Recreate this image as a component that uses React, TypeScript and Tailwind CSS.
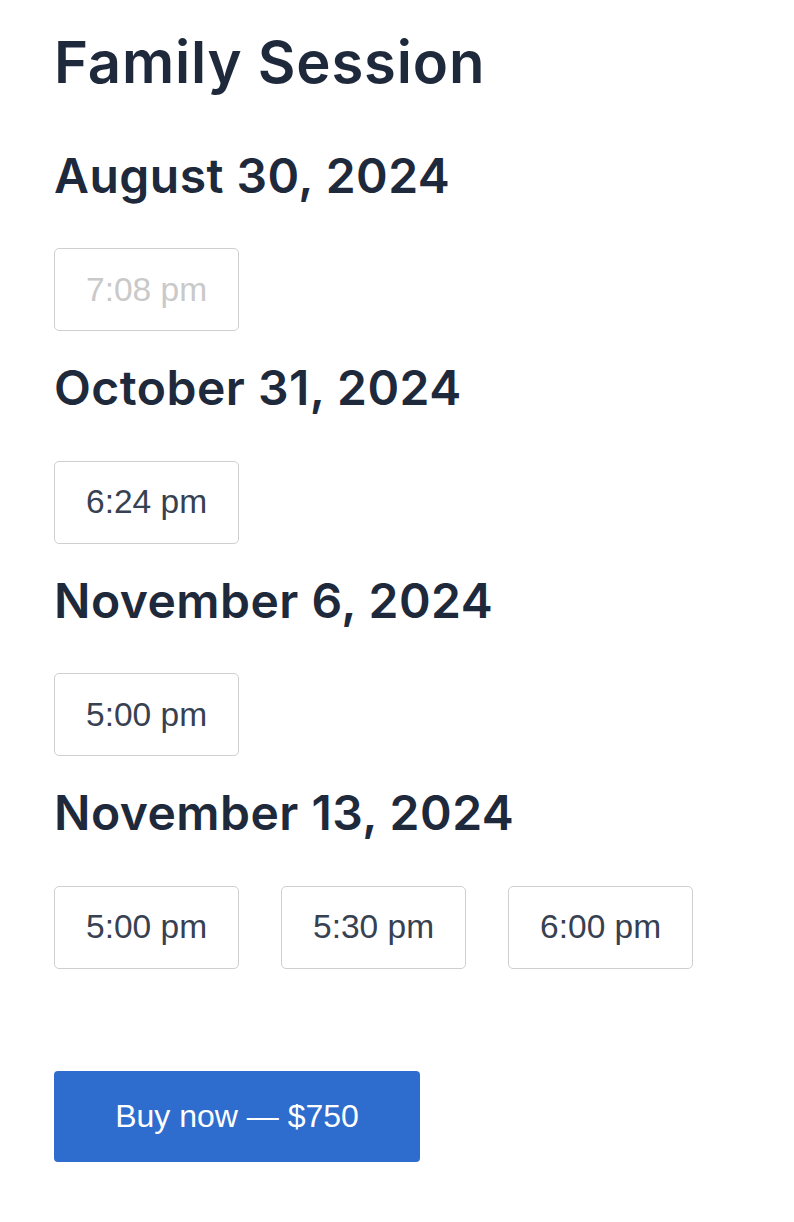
const SESSIONS = [
  { date: "August 30, 2024", times: [{ t: "7:08 pm", off: true }] },
  { date: "October 31, 2024", times: [{ t: "6:24 pm" }] },
  { date: "November 6, 2024", times: [{ t: "5:00 pm" }] },
  { date: "November 13, 2024", times: [{ t: "5:00 pm" }, { t: "5:30 pm" }, { t: "6:00 pm" }] },
];

function TimeSlot({ label, off }: { label: string; off?: boolean }) {
  return (
    <button
      disabled={off}
      className={
        "h-[83px] px-[31px] border border-[#cfcfcf] rounded-[5px] bg-white text-[33.5px] leading-none font-['Liberation_Sans',Arial,sans-serif] " +
        (off ? "text-[#c9c9c9]" : "text-[#374151]")
      }
    >
      {label}
    </button>
  );
}

export default function App() {
  return (
    <div className="min-h-screen bg-white px-[54px] pt-[27px] font-['Inter',sans-serif] text-[#1e293b]">
      <h1 className="text-[58px] leading-[70px] font-semibold tracking-[0.014em] mb-[49.5px]">Family Session</h1>

      <div className="flex flex-col gap-[28px]">
        {SESSIONS.map((s) => (
          <section key={s.date}>
            <h2 className="text-[48px] leading-[58px] font-semibold tracking-[0.01em] mb-[43.5px]">{s.date}</h2>
            <div className="flex gap-[42px]">
              {s.times.map((x, i) => (
                <TimeSlot key={i} label={x.t} off={"off" in x ? x.off : false} />
              ))}
            </div>
          </section>
        ))}
      </div>

      <button className="mt-[102px] w-[366px] h-[91px] rounded-[4px] bg-[#2e6dcd] text-white text-[32px] font-['Liberation_Sans',Arial,sans-serif]">
        Buy now — $750
      </button>
    </div>
  );
}
